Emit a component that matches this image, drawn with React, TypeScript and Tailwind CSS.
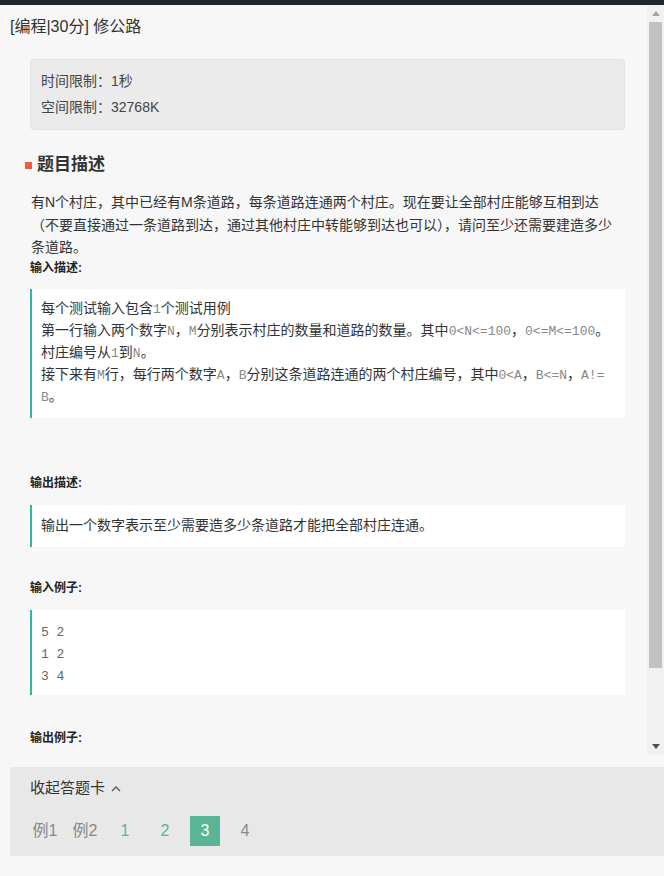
import React from "react";

const sans = "font-['Liberation_Sans','Noto_Sans_CJK_SC',sans-serif]";
const mono = "font-['Liberation_Mono','Noto_Sans_CJK_SC',monospace]";

function Code({ children }: { children: React.ReactNode }) {
  return <span className={`${mono} text-[13px] leading-none text-[#888]`}>{children}</span>;
}

function Label({ children, className = "" }: { children: React.ReactNode; className?: string }) {
  return (
    <div className={`text-[12px] leading-[18px] font-bold text-[#222] ${className}`}>
      {children}
    </div>
  );
}

function Quote({ children, className = "" }: { children: React.ReactNode; className?: string }) {
  return (
    <div
      className={`mr-[22px] ml-[30px] border-l-2 border-[#2db89b] bg-white pl-[9px] pr-[2px] text-[14px] leading-[22px] text-[#333] ${className}`}
    >
      {children}
    </div>
  );
}

function Scrollbar() {
  return (
    <div className="flex w-[17px] flex-col bg-[#f1f1f1]">
      <div className="flex h-[17px] items-center justify-center">
        <svg width="8" height="5" viewBox="0 0 8 5">
          <path d="M0 5 L4 0 L8 5 Z" fill="#a3a3a3" />
        </svg>
      </div>
      <div className="flex-1 px-[2px]">
        <div className="h-[646px] bg-[#c1c1c1]" />
      </div>
      <div className="flex h-[17px] items-center justify-center">
        <svg width="8" height="5" viewBox="0 0 8 5">
          <path d="M0 0 L8 0 L4 5 Z" fill="#505050" />
        </svg>
      </div>
    </div>
  );
}

const pages: { label: string; kind: "example" | "done" | "current" | "todo" }[] = [
  { label: "例1", kind: "example" },
  { label: "例2", kind: "example" },
  { label: "1", kind: "done" },
  { label: "2", kind: "done" },
  { label: "3", kind: "current" },
  { label: "4", kind: "todo" },
];

function pageCls(kind: string): string {
  if (kind === "current") return "bg-[#5ab596] text-white";
  if (kind === "done") return "text-[#5ab596]";
  return "text-[#888]";
}

export default function App() {
  return (
    <div className={`flex h-[876px] w-[664px] flex-col overflow-hidden bg-[#f7f7f7] ${sans}`}>
      <div className="h-[5px] bg-[#22272e]" />

      <div className="flex h-[750px]">
        <div className="flex-1 overflow-hidden">
          {/* title */}
          <h2 className="mt-[11px] pl-[10px] text-[16px] leading-[22px] text-[#333]">
            [编程|30分] 修公路
          </h2>

          {/* limits */}
          <div className="mt-[21px] mr-[22px] ml-[30px] rounded-[4px] border border-[#e2e2e2] bg-[#ebebeb] pt-[8px] pb-[9px] pl-[10px] text-[14px] leading-[26px] text-[#444]">
            <div>时间限制：1秒</div>
            <div>空间限制：32768K</div>
          </div>

          {/* heading */}
          <div className="mt-[23px] flex items-center pl-[25px]">
            <span className="mr-[5px] h-[7px] w-[7px] bg-[#ef5a40]" />
            <span className="text-[17px] leading-[24px] font-bold text-[#333]">题目描述</span>
          </div>

          <div className="mt-[14px] mr-[22px] ml-[31px] text-[14px] leading-[22.5px] text-[#333]">
            有N个村庄，其中已经有M条道路，每条道路连通两个村庄。现在要让全部村庄能够互相到达（不要直接通过一条道路到达，通过其他村庄中转能够到达也可以），请问至少还需要建造多少条道路。
          </div>

          <Label className="ml-[30px]">输入描述:</Label>
          <Quote className="mt-[12px] pt-[8px] pb-[11px]">
            <div className="whitespace-nowrap">
              每个测试输入包含<Code>1</Code>个测试用例
            </div>
            <div className="whitespace-nowrap">
              第一行输入两个数字<Code>N</Code>，<Code>M</Code>分别表示村庄的数量和道路的数量。其中
              <Code>0&lt;N&lt;=100</Code>，<Code>0&lt;=M&lt;=100</Code>。
            </div>
            <div className="whitespace-nowrap">
              村庄编号从<Code>1</Code>到<Code>N</Code>。
            </div>
            <div className="whitespace-nowrap">
              接下来有<Code>M</Code>行，每行两个数字<Code>A</Code>，<Code>B</Code>
              分别这条道路连通的两个村庄编号，其中<Code>0&lt;A</Code>，<Code>B&lt;=N</Code>，
              <Code>A!=</Code>
            </div>
            <div>
              <Code>B</Code>。
            </div>
          </Quote>

          <Label className="mt-[56px] ml-[30px]">输出描述:</Label>
          <Quote className="mt-[13px] pt-[9px] pb-[11px]">
            输出一个数字表示至少需要造多少条道路才能把全部村庄连通。
          </Quote>

          <Label className="mt-[32px] ml-[30px]">输入例子:</Label>
          <Quote className="mt-[13px] pt-[12px] pb-[7px]">
            <div className={`${mono} text-[13px] text-[#666]`}>5 2</div>
            <div className={`${mono} text-[13px] text-[#666]`}>1 2</div>
            <div className={`${mono} text-[13px] text-[#666]`}>3 4</div>
          </Quote>

          <Label className="mt-[34px] ml-[30px]">输出例子:</Label>
        </div>
        <Scrollbar />
      </div>

      {/* answer card */}
      <div className="mt-[12px] ml-[10px] h-[89px] bg-[#e8e8e8] pt-[11px] pl-[20px]">
        <div className="flex items-center gap-[6px] text-[15px] leading-[20px] text-[#333]">
          收起答题卡
          <svg width="10" height="7" viewBox="0 0 10 7">
            <path d="M1 6 L5 2 L9 6" fill="none" stroke="#555" strokeWidth="1.3" />
          </svg>
        </div>
        <div className="mt-[18px] flex gap-[10px]">
          {pages.map((p) => (
            <div
              key={p.label}
              className={`flex h-[30px] w-[30px] items-center justify-center text-[16px] ${pageCls(p.kind)}`}
            >
              {p.label}
            </div>
          ))}
        </div>
      </div>
    </div>
  );
}
